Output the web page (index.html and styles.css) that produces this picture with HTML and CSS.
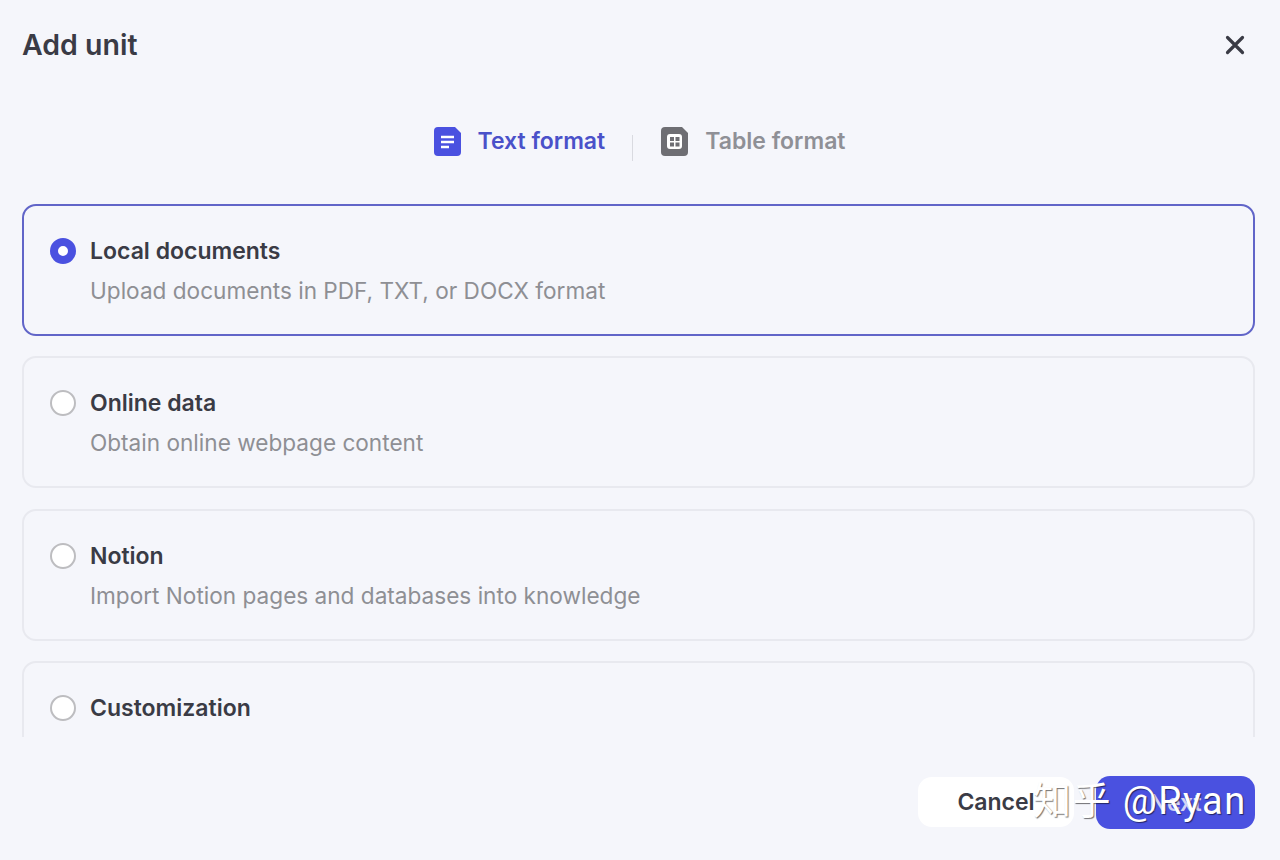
FILE: index.html
```html
<!DOCTYPE html>
<html lang="en">
<head>
<meta charset="utf-8">
<title>Add unit</title>
<link rel="stylesheet" href="styles.css">
</head>
<body>
<div class="dialog">
  <header class="header">
    <h1 class="title">Add unit</h1>
    <svg class="close" viewBox="0 0 20 20" width="20" height="20" aria-label="Close"><path d="M2.500 2.500 17.500 17.500M17.500 2.500 2.500 17.500" fill="none" stroke="#3a3b45" stroke-width="3.2" stroke-linecap="round"/></svg>
  </header>
  <nav class="tabs">
    <div class="tab tab-active">
      <svg class="tab-icon" viewBox="0 0 27 29" width="27" height="29"><path d="M4 0H21L27 6V25A4 4 0 0 1 23 29H4A4 4 0 0 1 0 25V4A4 4 0 0 1 4 0Z" fill="#4a51e0"/><path d="M7 10H20M7 15H20M7 20H15" stroke="#fff" stroke-width="2.4" fill="none"/></svg>
      <span>Text format</span>
    </div>
    <span class="tab-sep"></span>
    <div class="tab">
      <svg class="tab-icon" viewBox="0 0 27 29" width="27" height="29"><path d="M4 0H21L27 6V25A4 4 0 0 1 23 29H4A4 4 0 0 1 0 25V4A4 4 0 0 1 4 0Z" fill="#6e6e73"/><rect x="6" y="7" width="15" height="15" rx="3" fill="#fff"/><rect x="9" y="10" width="4" height="4" fill="#6e6e73"/><rect x="14.500" y="10" width="4" height="4" fill="#6e6e73"/><rect x="9" y="15.500" width="4" height="4" fill="#6e6e73"/><rect x="14.500" y="15.500" width="4" height="4" fill="#6e6e73"/></svg>
      <span>Table format</span>
    </div>
  </nav>
  <div class="options">
    <div class="card card-selected">
      <div class="card-head"><span class="radio radio-on"></span><span class="card-title">Local documents</span></div>
      <p class="card-desc">Upload documents in PDF, TXT, or DOCX format</p>
    </div>
    <div class="card">
      <div class="card-head"><span class="radio"></span><span class="card-title">Online data</span></div>
      <p class="card-desc">Obtain online webpage content</p>
    </div>
    <div class="card">
      <div class="card-head"><span class="radio"></span><span class="card-title">Notion</span></div>
      <p class="card-desc">Import Notion pages and databases into knowledge</p>
    </div>
    <div class="card">
      <div class="card-head"><span class="radio"></span><span class="card-title">Customization</span></div>
    </div>
  </div>
  <footer class="footer">
    <button class="btn btn-cancel">Cancel</button>
    <button class="btn btn-next">Next</button>
    <span class="watermark">知乎 @Ryan</span>
  </footer>
</div>
</body>
</html>
```
FILE: styles.css
```css
* { box-sizing: border-box; }
html, body { margin: 0; height: 100%; }
body {
  background: #f5f6fb;
  font-family: Inter, "Noto Sans CJK SC", sans-serif;
  color: #3a3b45;
  overflow: hidden;
}
.dialog {
  height: 860px;
  padding: 0 25px 0 22px;
  display: flex;
  flex-direction: column;
}
.header {
  height: 90px;
  display: flex;
  align-items: center;
  justify-content: space-between;
}
.title {
  margin: 0;
  font-size: 28.500px;
  font-weight: 600;
  line-height: 34px;
}
.close { margin-right: 10px; }
.tabs {
  height: 114px;
  display: flex;
  justify-content: center;
  align-items: flex-start;
  padding-top: 36px;
  padding-left: 2px;
}
.tab {
  display: flex;
  align-items: center;
  gap: 17px;
  font-size: 23px;
  font-weight: 600;
  line-height: 31px;
  color: #8f9096;
}
.tab-active { color: #4a51c9; }
.tab-icon { display: block; }
.tab-sep {
  width: 1px;
  height: 26px;
  margin: 9px 28px 0 27px;
  background: #d9dae0;
}
.options {
  height: 533px;
  overflow: hidden;
  display: flex;
  flex-direction: column;
  gap: 20.400px;
}
.card {
  flex: none;
  height: 132px;
  padding: 27px 26px;
  border: 2px solid #e8e9ef;
  border-radius: 14px;
}
.card-selected { border-color: #6165c8; }
.card-head {
  display: flex;
  align-items: center;
  gap: 14px;
  height: 40px;
  margin-top: -2px;
}
.radio {
  width: 26px;
  height: 26px;
  flex: none;
  border-radius: 50%;
  background: #fff;
  border: 2px solid #bdbdc0;
}
.radio-on {
  border: 8px solid #4a51e0;
}
.card-title {
  font-size: 23px;
  font-weight: 600;
}
.card-desc {
  margin: 0;
  padding-left: 40px;
  font-size: 22.600px;
  line-height: 40px;
  color: #8e8f94;
}
.footer {
  position: relative;
  flex: 1;
  display: flex;
  justify-content: flex-end;
  align-items: flex-start;
  gap: 22px;
  padding-top: 39px;
}
.btn {
  border: 0;
  font-family: inherit;
  font-size: 23px;
  font-weight: 600;
  border-radius: 14px;
}
.btn-cancel {
  width: 156px;
  height: 50px;
  margin-top: 1px;
  background: #fff;
  color: #3a3b45;
}
.btn-next {
  width: 159px;
  height: 53px;
  background: #4a51e0;
  color: rgba(255, 255, 255, 0.75);
}
.watermark {
  position: absolute;
  left: 1011px;
  top: 39px;
  font-size: 38px;
  line-height: 50px;
  letter-spacing: 1.400px;
  white-space: nowrap;
  color: #fff;
  font-family: Roboto, "Noto Sans CJK SC", sans-serif;
  text-shadow: 1px 1px 1px rgba(0, 0, 0, 0.55);
}
```
